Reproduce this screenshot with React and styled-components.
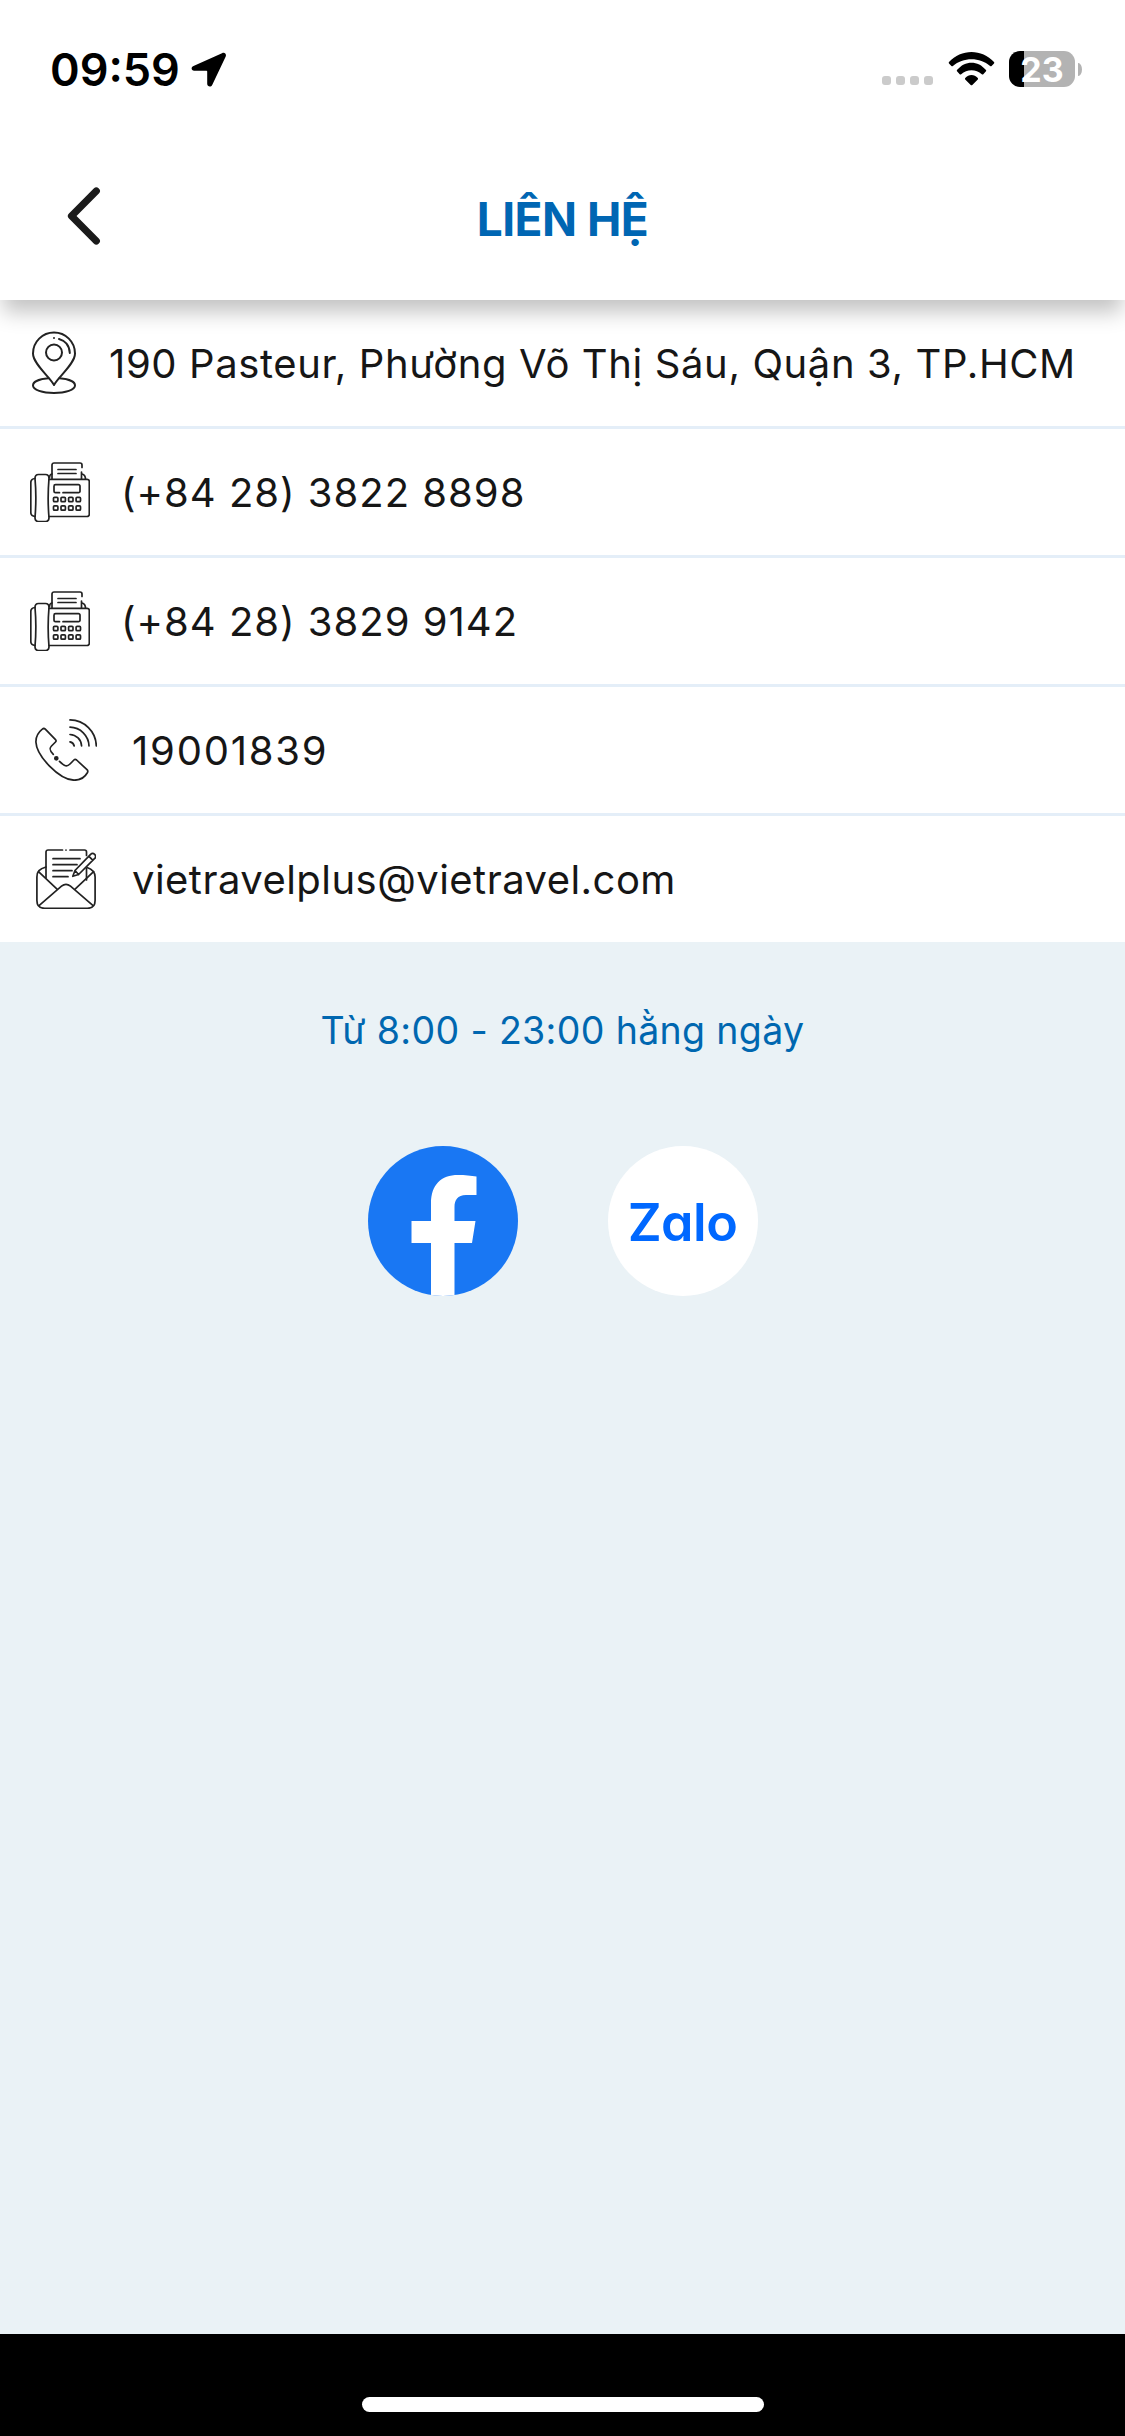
import React from "react";
import styled, { createGlobalStyle } from "styled-components";

const GlobalStyle = createGlobalStyle`
  body {
    margin: 0;
    background: #eaf2f6;
    font-family: Inter, "Noto Sans", sans-serif;
  }
`;
const Screen = styled.div`
  display: flex;
  flex-direction: column;
  width: 1125px;
  height: 2436px;
  overflow: hidden;
  background: #eaf2f6;
`;
const Header = styled.header`
  position: relative;
  z-index: 1;
  height: 300px;
  background: #fff;
  box-shadow: 0 15px 20px -3px rgba(0, 0, 0, 0.24);
`;
const StatusBar = styled.div`
  display: flex;
  justify-content: space-between;
  height: 132px;
  box-sizing: border-box;
  padding: 51px 43px 0 50px;
`;
const StatusGroup = styled.div`
  display: flex;
  align-items: flex-start;
  height: 36px;
`;
const Time = styled.span`
  width: 141px;
  font-size: 45px;
  font-weight: 600;
  line-height: 37px;
  white-space: nowrap;
`;
const LocationIcon = styled.svg`
  margin-top: 1px;
`;
const Signal = styled.div`
  display: flex;
  gap: 5px;
  margin: 25px 15px 0 0;
`;
const SignalDot = styled.span`
  width: 9px;
  height: 9px;
  border-radius: 3px;
  background: #cbcbcb;
`;
const WifiIcon = styled.svg`
  margin: 0 14px 0 0;
`;
const Battery = styled.div`
  width: 66px;
  height: 36px;
  border-radius: 11px;
  background: linear-gradient(to right, #000 15px, #b3b3b3 15px);
  color: #fff;
  font-size: 34px;
  font-weight: 700;
  line-height: 37px;
  text-align: center;
`;
const BatteryTip = styled.span`
  width: 4px;
  height: 13px;
  margin: 12px 0 0 3px;
  border-radius: 0 4px 4px 0 / 0 7px 7px 0;
  background: #b3b3b3;
`;
const NavBar = styled.div`
  display: grid;
  grid-template-columns: 150px 1fr 150px;
  align-items: center;
  height: 168px;
`;
const BackButton = styled.button`
  display: flex;
  padding: 0 0 0 66px;
  border: 0;
  background: none;
`;
const Title = styled.h1`
  margin: 6px 0 0;
  color: #0066b3;
  font-size: 46px;
  font-weight: 700;
  line-height: 56px;
  letter-spacing: -0.5px;
  text-align: center;
`;
const ContactList = styled.ul`
  margin: 0;
  padding: 0;
  list-style: none;
  background: #fff;
`;
const ContactRow = styled.li`
  display: flex;
  align-items: center;
  gap: ${props => props.$gap}px;
  height: 126px;
  padding-left: ${props => props.$inset}px;
  border-bottom: 3px solid #e4eef8;
  &:last-child {
    border-bottom: 0;
  }
`;
const LineIcon = styled.svg`
  flex: none;
  fill: none;
  stroke: #222;
  stroke-width: ${props => props.$weight || 1.7};
  stroke-linecap: round;
  stroke-linejoin: round;
`;
const ContactText = styled.span`
  padding-top: 2px;
  color: #161616;
  font-size: 40px;
  line-height: 50px;
  letter-spacing: ${props => props.$spacing}px;
  white-space: nowrap;
`;
const Hours = styled.p`
  margin: 65px 0 0;
  color: #0067b0;
  font-size: 37.5px;
  line-height: 48px;
  letter-spacing: 0.35px;
  text-align: center;
`;
const SocialLinks = styled.div`
  display: flex;
  justify-content: center;
  gap: 90px;
  margin-top: 91px;
`;
const SocialButton = styled.a`
  display: flex;
  align-items: center;
  justify-content: center;
  width: 150px;
  height: 150px;
  border-radius: 50%;
  overflow: hidden;
  background: ${props => props.$color};
`;
const ZaloName = styled.span`
  padding-top: 3px;
  color: #0068ff;
  font-size: 52px;
  font-weight: 600;
  line-height: 60px;
  letter-spacing: -0.5px;
  font-feature-settings: "cv11";
`;
const HomeBar = styled.footer`
  display: flex;
  justify-content: center;
  height: 102px;
  margin-top: auto;
  background: #000;
`;
const HomeIndicator = styled.div`
  width: 402px;
  height: 15px;
  margin-top: 63px;
  border-radius: 8px;
  background: #fff;
`;

const PinIcon = () => (
  <LineIcon width="48" height="66" viewBox="0 0 48 66" $weight={2}>
    <path d="M24 55C20 47 3 34 3 23.500a21 21 0 0 1 42 0C45 34 28 47 24 55z" />
    <circle cx="24" cy="22.500" r="8" />
    <path d="M24 8v.1M29 9C35 10.500 39.500 15.500 39.800 23" />
    <path d="M18.500 48.300C9 49 3 51.800 3 55.500c0 4.300 9.400 7.500 21 7.500s21-3.200 21-7.500c0-3.700-6-6.500-15.500-7.200" />
  </LineIcon>
);

const FaxIcon = () => (
  <LineIcon width="60" height="60" viewBox="0 0 60 60">
    <path d="M22 17V3a2 2 0 0 1 2-2h26a2 2 0 0 1 2 2v2.500M51.500 10v7" />
    <path d="M28 7.500h18M28 11.500h18M19.500 15.500q0-3 2.500-3.500M52 12q3.500 1 3.500 5" />
    <path d="M19 17.300h38a2.300 2.300 0 0 1 2.300 2.300v32.600a2.300 2.300 0 0 1-2.300 2.300H19" />
    <path d="M5 16.500q-4.200.5-4.200 4v30q0 3.500 4.200 4" />
    <path d="M8.500 12.500h7q3.500 0 3.500 4-1.700 20 0 39 0 4-3.500 4h-7q-3.500 0-3.500-4 1.700-20 0-39 0-4 3.500-4z" />
    <path d="M29.500 30.700h-4a1.500 1.500 0 0 1-1.500-1.500v-5a1.500 1.500 0 0 1 1.500-1.500h23a1.500 1.500 0 0 1 1.500 1.500v5a1.500 1.500 0 0 1-1.500 1.500H33" />
    {[37.500, 46].map(y =>
      [25.700, 33.200, 40.800, 48.300].map(x => (
        <rect key={`${x}-${y}`} x={x - 2.2} y={y - 2.2} width="4.400" height="4.400" rx="1" />
      ))
    )}
  </LineIcon>
);

const PhoneIcon = () => (
  <LineIcon width="62" height="62" viewBox="0 0 62 62">
    <path d="M18.300 35.300C14.500 31.500 14 29.500 16.500 27L20.500 23q1.200-1.200 0-2.400L10.300 10.200q-1.400-1.400-3 0C2.500 14 .8 18 .9 23 1.500 37 24 60.500 39 61.200 45.500 61.300 50 58 52.500 53.500q.8-1.600-.5-2.900L41.600 41q-1.400-1.200-2.700 0L35 45c-3 3-5.500 2.500-10.500-2.600" />
    <circle cx="21.300" cy="39.300" r="1.500" fill="#222" />
    <path d="M35 .9A26.600 26.600 0 0 1 61.300 27M35 8.200A19.300 19.300 0 0 1 54 27M35 15.500A12 12 0 0 1 46.600 27M35 22.800Q38.500 23.500 39.200 27" />
  </LineIcon>
);

const MailIcon = () => (
  <LineIcon width="60" height="60" viewBox="0 0 60 60">
    <path d="M10 29V3a2 2 0 0 1 2-2h14.500M30 1v.1M34 1h14.500a2 2 0 0 1 2 2v3.500M50.500 19.500V31" />
    <path d="M17 9.700h27M17 15.700h24M17 21.700h19M17 27.700h15" />
    <path d="M36.800 27.300L39 21.500 54.600 5.300a2.900 2.900 0 0 1 4.100 4.100L42.600 25.500zM39 21.500l3.600 4M53 7.400l3.700 3.700" />
    <path d="M10 18C3.500 20 .9 22.500.9 28v23.500q0 7.800 7.800 7.800h42.600q7.800 0 7.800-7.800V28c0-4.500-2-7.500-8-9.500" />
    <path d="M2.500 22.700l18.800 17.600M57.600 22.700L38.800 40.300M3.300 56.300L25.500 37.200q4.500-3.800 9 0L56.800 56.300" />
  </LineIcon>
);

const contacts = [
  {
    icon: PinIcon,
    text: "190 Pasteur, Phường Võ Thị Sáu, Quận 3, TP.HCM",
    inset: 30,
    gap: 31,
    spacing: 0.62
  },
  { icon: FaxIcon, text: "(+84 28) 3822 8898", inset: 30, gap: 31, spacing: 1 },
  { icon: FaxIcon, text: "(+84 28) 3829 9142", inset: 30, gap: 31, spacing: 1 },
  { icon: PhoneIcon, text: "19001839", inset: 35, gap: 35, spacing: 1.8 },
  {
    icon: MailIcon,
    text: "vietravelplus@vietravel.com",
    inset: 36,
    gap: 36,
    spacing: 0.46
  }
];

const App = () => (
  <Screen>
    <GlobalStyle />
    <Header>
      <StatusBar>
        <StatusGroup>
          <Time>09:59</Time>
          <LocationIcon width="36" height="36" viewBox="0 0 36 36">
            <path d="M2.500 14L31 1.200c2.800-1.200 4.800.8 3.600 3.600L21.200 33c-1.300 2.700-5 1.800-5-1.200V19.500q0-.7-.7-.7H3.200C.2 18.800-.4 15.200 2.500 14z" />
          </LocationIcon>
        </StatusGroup>
        <StatusGroup>
          <Signal>
            <SignalDot />
            <SignalDot />
            <SignalDot />
            <SignalDot />
          </Signal>
          <WifiIcon width="47" height="36" viewBox="0 0 47 36">
            <path d="M1 11C13-2.500 34-2.500 46 11q.6.800 0 1.500l-2.400 2.500q-.8.700-1.500 0C32 6 15 6 4.900 15q-.7.700-1.500 0L1 12.500q-.6-.7 0-1.500z" />
            <path d="M9 19c8-9.800 21-9.800 29 0q.5.700 0 1.300l-2.700 2.900q-.8.700-1.500 0c-5.800-5.400-14.800-5.400-20.600 0q-.7.700-1.500 0L9 20.300q-.5-.6 0-1.300z" />
            <path d="M17.200 27.100c3.500-4 9.100-4 12.600 0q.5.700 0 1.300l-5.500 5.500q-.8.700-1.600 0l-5.500-5.500q-.5-.6 0-1.300z" />
          </WifiIcon>
          <Battery>23</Battery>
          <BatteryTip />
        </StatusGroup>
      </StatusBar>
      <NavBar>
        <BackButton aria-label="Back">
          <svg width="36" height="60" viewBox="0 0 36 60" fill="none">
            <path
              d="M30.300 5L5.500 30l24.800 25"
              stroke="#1b1b1b"
              strokeWidth="7.200"
              strokeLinecap="round"
              strokeLinejoin="round"
            />
          </svg>
        </BackButton>
        <Title>LIÊN HỆ</Title>
      </NavBar>
    </Header>
    <ContactList>
      {contacts.map(({ icon: Icon, text, inset, gap, spacing }) => (
        <ContactRow key={text} $inset={inset} $gap={gap}>
          <Icon />
          <ContactText $spacing={spacing}>{text}</ContactText>
        </ContactRow>
      ))}
    </ContactList>
    <Hours>Từ 8:00 - 23:00 hằng ngày</Hours>
    <SocialLinks>
      <SocialButton $color="#1977f3" aria-label="Facebook">
        <svg width="150" height="150" viewBox="0 0 150 150">
          <path
            fill="#fff"
            d="M63 150V97H43.500V75H63V57c0-18 10-28 27-28 7 0 13 .6 18.500 1.500V49H98c-8.500 0-11.500 5-11.500 12v14h21L104 97H86.500v53z"
          />
        </svg>
      </SocialButton>
      <SocialButton $color="#fff">
        <ZaloName>Zalo</ZaloName>
      </SocialButton>
    </SocialLinks>
    <HomeBar>
      <HomeIndicator />
    </HomeBar>
  </Screen>
);

export default App;
